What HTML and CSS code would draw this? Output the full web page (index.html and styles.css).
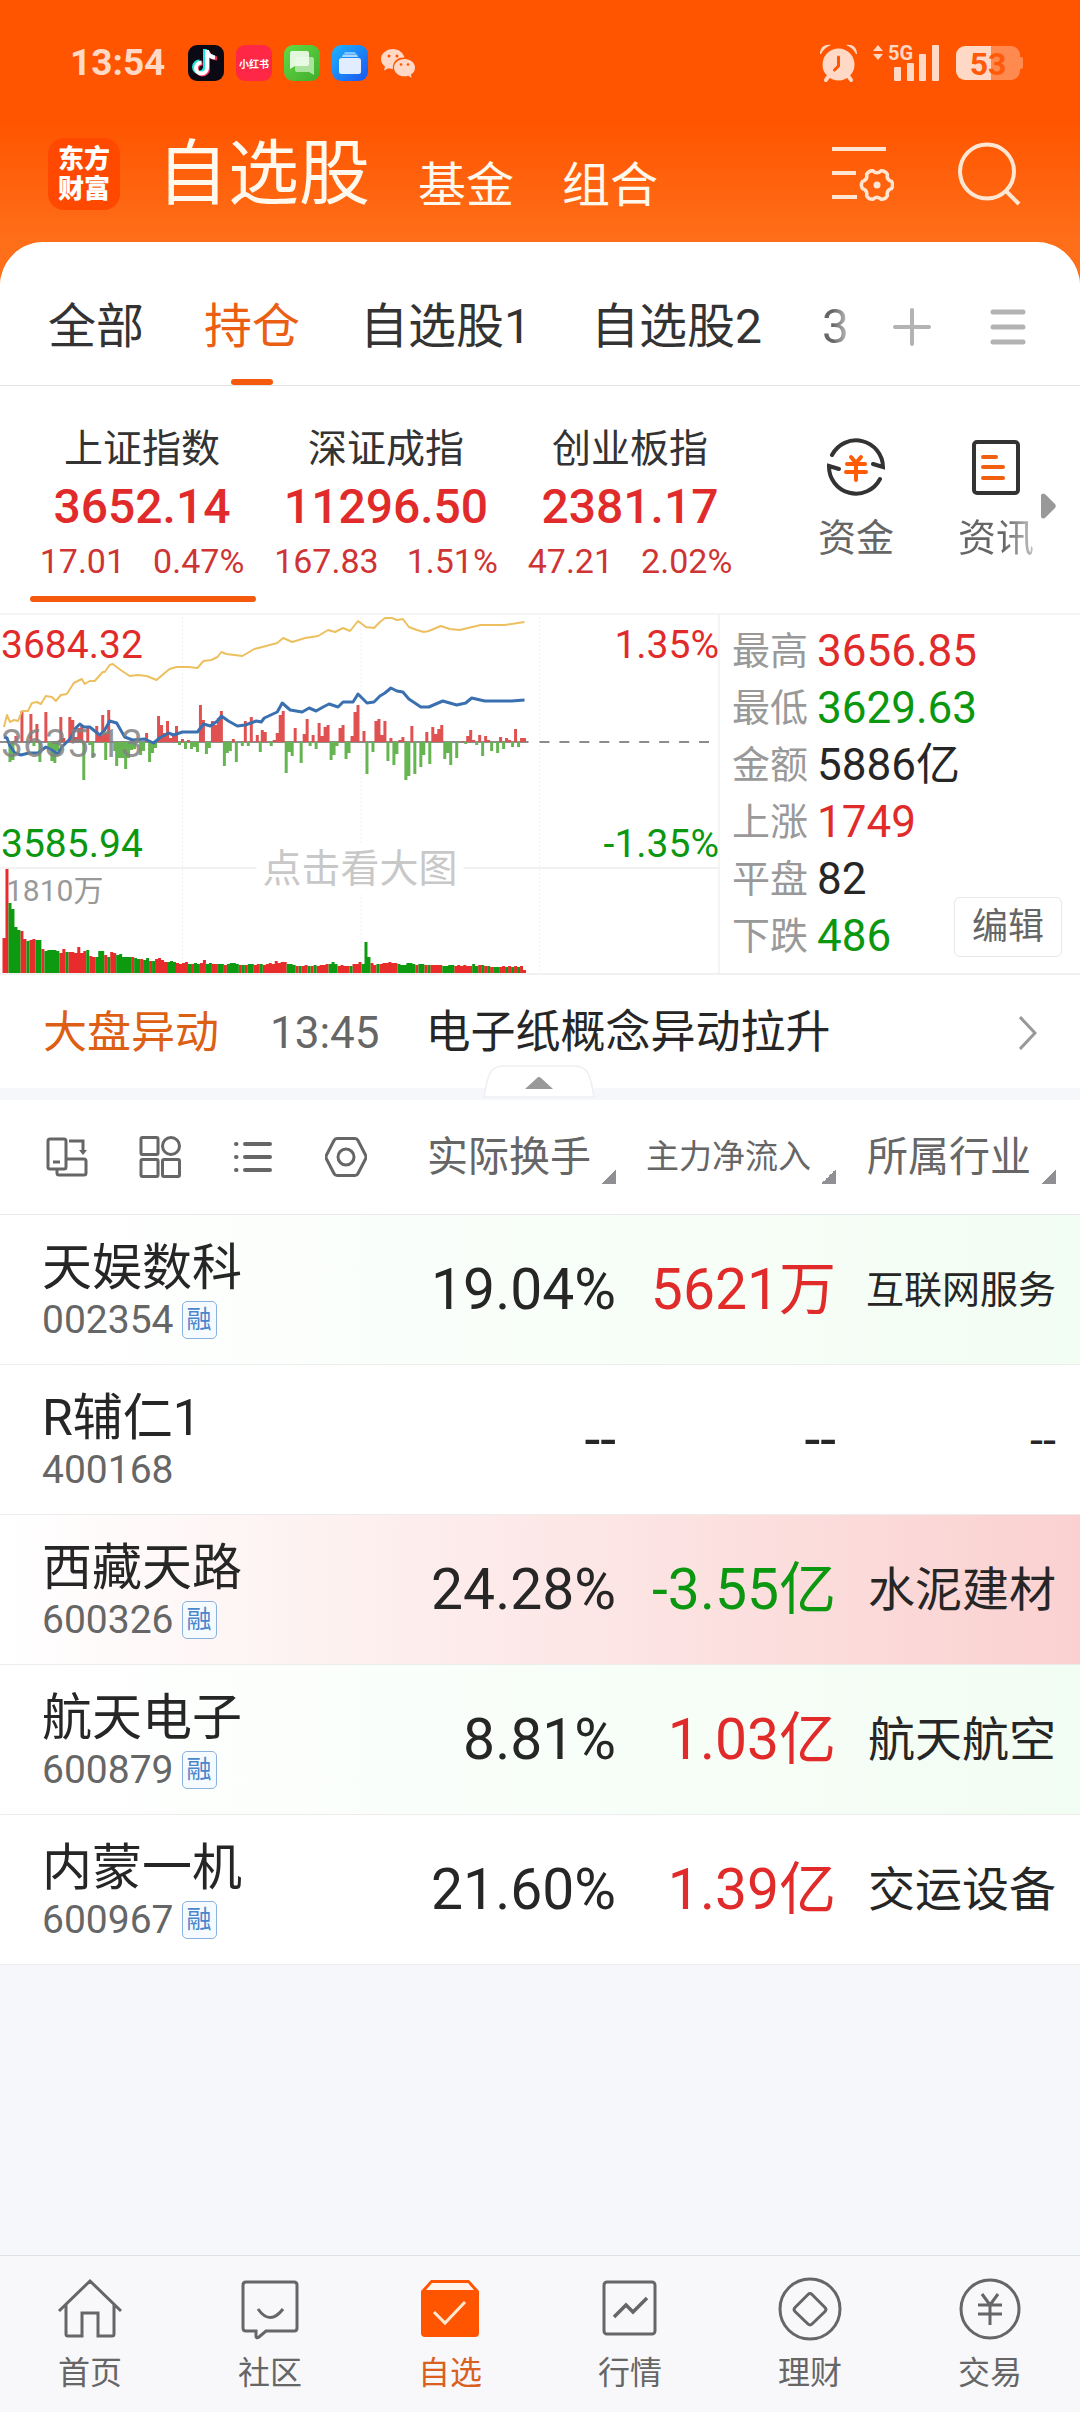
FILE: index.html
```html
<!DOCTYPE html>
<html lang="zh-CN">
<head>
<meta charset="utf-8">
<meta name="viewport" content="width=device-width, initial-scale=1">
<title>自选股</title>
<link rel="stylesheet" href="styles.css">
</head>
<body>
<header class="top">
  <div class="status">
    <span class="status-time">13:54</span>
    <svg class="app-icon" viewBox="0 0 36 36" aria-hidden="true">
      <rect width="36" height="36" rx="9" fill="#0b0a14"/>
      <g fill="none" stroke-width="4">
        <path d="M18 5v18a5.500 5.500 0 1 1-5.500-5.500M18 6c1 4 4 6 8 6.500" stroke="#25e5e0" transform="translate(-1 -1)"/>
        <path d="M19 5v18a5.500 5.500 0 1 1-5.500-5.500M19 6c1 4 4 6 9 6.500" stroke="#f9345f" transform="translate(1 1)"/>
        <path d="M19 5v18a5.500 5.500 0 1 1-5.500-5.500M19 6c1 4 4 6 8 6.500" stroke="#fff"/>
      </g>
    </svg>
    <span class="app-icon app-red">小红书</span>
    <svg class="app-icon" viewBox="0 0 36 36" aria-hidden="true">
      <defs><linearGradient id="msg" x1="0" y1="0" x2="1" y2="1"><stop offset="0" stop-color="#63d944"/><stop offset="1" stop-color="#40ad2d"/></linearGradient></defs>
      <rect width="36" height="36" rx="9" fill="url(#msg)"/>
      <path d="M13 12h15q2 0 2 2v16l-5-3H13q-2 0-2-2V14q0-2 2-2z" fill="#a9e39c"/>
      <path d="M8 6h15q2 0 2 2v11q0 2-2 2H11l-5 3V8q0-2 2-2z" fill="#eefbea" fill-opacity=".92"/>
    </svg>
    <svg class="app-icon" viewBox="0 0 36 36" aria-hidden="true">
      <defs><linearGradient id="fil" x1="0" y1="0" x2="1" y2="1"><stop offset="0" stop-color="#1db4ff"/><stop offset="1" stop-color="#1b55f0"/></linearGradient></defs>
      <rect width="36" height="36" rx="9" fill="url(#fil)"/>
      <path d="M13 7h10l1 2H12z" fill="#7cc5ff"/><path d="M11 9.500h14l1 2.500H10z" fill="#a9d8ff"/>
      <rect x="7" y="13" width="22" height="16" rx="2.500" fill="#e2ecff"/>
    </svg>
    <svg class="app-icon" viewBox="0 0 36 36" aria-hidden="true">
      <path d="M13 4C6.500 4 1 8.500 1 14c0 3 1.600 5.600 4 7.500L4 25.500l4.500-2.300q2.200.8 4.500.8C12 17 17 12 24.500 12.500 23 7.500 18.500 4 13 4z" fill="#ffd9c6"/>
      <path d="M24.500 14C18.700 14 14 17.900 14 22.700s4.700 8.600 10.500 8.600q1.900 0 3.600-.5l3.700 2-1-3.300c2.600-1.500 4.200-4 4.200-6.800C35 17.900 30.300 14 24.500 14z" fill="#ffd9c6"/>
      <g fill="#ff5500"><circle cx="9" cy="11" r="1.500"/><circle cx="17" cy="11" r="1.500"/><circle cx="21" cy="19.500" r="1.300"/><circle cx="28" cy="19.500" r="1.300"/></g>
    </svg>
    <span class="status-right">
      <svg width="37" height="38" viewBox="0 0 37 38" aria-hidden="true">
        <circle cx="18.500" cy="20.500" r="16" fill="#ffd9c6"/>
        <path d="M8 33l-2 3M29 33l2 3" stroke="#ffd9c6" stroke-width="4" stroke-linecap="round"/>
        <path d="M0 10C0 3 5 0 11 1 6 3 3 6 1 10zM37 10C37 3 32 0 26 1c5 2 8 5 10 9z" fill="#ffd9c6"/>
        <path d="M18.500 13v9l-4 4" fill="none" stroke="#ff5500" stroke-width="3" stroke-linecap="round"/>
      </svg>
      <svg width="67" height="50" viewBox="0 -6 67 50" aria-hidden="true">
        <path d="M5 1l5 6H0zM5 16l5-6H0z" fill="#ffd9c6"/>
        <text x="15" y="16" class="signal-text">5G</text>
        <g fill="#ffd9c6"><rect x="21" y="23" width="7" height="14" rx="1"/><rect x="34" y="19" width="7" height="18" rx="1"/><rect x="46" y="10" width="7" height="27" rx="1"/><rect x="59" y="1" width="7" height="36" rx="1"/></g>
      </svg>
      <span class="battery">53</span>
    </span>
  </div>
  <div class="title-bar">
    <a class="logo" href="#home">东方<br>财富</a>
    <nav class="title-nav">
      <h1 class="title">自选股</h1>
      <a href="#fund">基金</a>
      <a href="#portfolio">组合</a>
    </nav>
    <button class="icon-btn" aria-label="设置">
      <svg width="62" height="56" viewBox="0 0 62 56" fill="none" stroke="#ffe6d2" stroke-width="4">
        <path d="M0 3h54M0 27h24M0 51h25"/>
        <path d="M16.500-4.100Q19 0 16.500 4.100 10.500 6 11.800 12.200 9.500 16.500 4.700 16.300 0 11.500-4.700 16.300-9.500 16.500-11.800 12.200-10.500 6-16.500 4.100-19 0-16.500-4.100-10.500-6-11.800-12.200-9.500-16.500-4.700-16.300 0-11.500 4.700-16.300 9.500-16.500 11.800-12.200 10.500-6 16.500-4.100z" transform="translate(45 39) scale(.88)"/>
        <circle cx="45" cy="39" r="3.500" fill="#ffe6d2" stroke="none"/>
      </svg>
    </button>
    <button class="icon-btn" aria-label="搜索">
      <svg width="63" height="64" viewBox="0 0 63 64" fill="none" stroke="#ffe6d2" stroke-width="4"><circle cx="29" cy="29.500" r="27"/><path d="M47 48l14 14"/></svg>
    </button>
  </div>
</header>

<main class="panel">
  <div class="tabs">
    <nav class="tab-list">
      <a href="#all">全部</a>
      <a class="active" href="#hold">持仓</a>
      <a href="#g1">自选股1</a>
      <a href="#g2">自选股2</a>
      <a class="fade" href="#g3">3</a>
    </nav>
    <button class="icon-btn" aria-label="添加分组">
      <svg width="38" height="38" viewBox="0 0 38 38" stroke="#b3b3b3" stroke-width="4" stroke-linecap="round"><path d="M2 19h34M19 2v34"/></svg>
    </button>
    <button class="icon-btn" aria-label="分组列表">
      <svg width="36" height="38" viewBox="0 0 36 38" stroke="#b3b3b3" stroke-width="5" stroke-linecap="round"><path d="M3 4h30M3 19h30M3 34h30"/></svg>
    </button>
  </div>

  <section class="indices">
    <button class="index active"><span class="index-name">上证指数</span><strong>3652.14</strong><span class="index-change"><span>17.01</span><span>0.47%</span></span></button>
    <button class="index"><span class="index-name">深证成指</span><strong>11296.50</strong><span class="index-change"><span>167.83</span><span>1.51%</span></span></button>
    <button class="index"><span class="index-name">创业板指</span><strong>2381.17</strong><span class="index-change"><span>47.21</span><span>2.02%</span></span></button>
    <div class="shortcuts">
      <a class="shortcut" href="#flow">
        <svg width="60" height="60" viewBox="0 0 60 60" fill="none" stroke="#333" stroke-width="4" stroke-linecap="round">
          <path d="M6 18A27 27 0 0 1 57 30l-10-3M54 42A27 27 0 0 1 3 29l10 3"/>
          <path d="M25 20l5 6 5-6M21 27h18M20 35h20M30 27v16" stroke="#ff5a05"/>
        </svg>
        <span>资金</span>
      </a>
      <a class="shortcut" href="#news">
        <svg width="60" height="60" viewBox="0 0 60 60" fill="none" stroke-linecap="round">
          <rect x="8" y="5" width="44" height="51" rx="3" stroke="#333" stroke-width="4"/>
          <path d="M17 20h13M17 30h20M17 41h20" stroke="#f0600f" stroke-width="4"/>
        </svg>
        <span class="fade">资讯</span>
      </a>
    </div>
    <svg class="more" width="15" height="26" viewBox="0 0 15 26" aria-hidden="true"><path d="M0 2q2-3 5 0l9 9q1.500 2 0 4l-9 9q-3 3-5 0z" fill="#999"/></svg>
  </section>

  <section class="market">
    <div class="chart">
      <svg id="chart" class="chart-svg" viewBox="0 0 720 358" preserveAspectRatio="none" aria-label="分时图">
        <path class="grid" d="M0 253h720"/>
        <path class="grid dotted" d="M183 2v356M362 2v356M541 2v356"/>
        <path class="mid" d="M0 127h530"/>
        <path class="mid" stroke-dasharray="10 10" d="M541 127h172"/>
        <path id="flow-up" class="flow up"/>
        <path id="flow-down" class="flow down"/>
        <path id="vol-up" class="vol up"/>
        <path id="vol-down" class="vol down"/>
        <polyline class="line avg" points="4,112 7,100 10,107 14,105 18,106 22,96 28,96 32,88 37,87 41,89 46,81 52,82 56,86 61,80 67,79 74,68 82,64 85,69 90,66 95,66 103,57 105,57 110,50 113,49 121,55 130,61 138,60 147,61 152,63 157,65 164,59 170,54 177,52 189,52 198,53 204,46 212,45 218,42 222,37 227,39 243,41 255,34 263,32 278,28 284,23 293,27 306,23 319,21 329,15 336,17 344,13 351,16 359,6 367,12 375,13 381,7 386,3 393,3 398,5 404,4 410,12 418,15 425,17 430,16 442,11 451,14 461,15 482,10 506,10 526,7"/>
        <polyline class="line price" points="4,122 7,123 10,131 15,138 21,140 29,138 38,138 46,132 52,135 58,139 62,132 71,123 76,113 80,109 84,112 90,112 100,120 105,115 110,106 117,108 125,122 133,125 145,124 154,128 160,123 169,118 174,120 183,117 198,117 204,109 211,111 218,106 222,101 229,106 238,111 246,110 257,106 262,107 265,103 278,97 283,88 291,95 303,97 310,93 317,96 324,92 330,89 339,92 344,87 354,87 359,79 368,88 375,87 381,81 386,78 392,73 398,76 404,77 410,84 422,92 430,92 444,86 458,90 467,88 473,83 486,86 513,86 526,85"/>
      </svg>
      <span class="mark mark-high rise">3684.32</span>
      <span class="mark mark-high right rise">1.35%</span>
      <span class="mark mark-mid">3635.13</span>
      <span class="mark mark-low fall">3585.94</span>
      <span class="mark mark-low right fall">-1.35%</span>
      <span class="mark mark-vol">1810万</span>
      <a class="chart-hint" href="#chart">点击看大图</a>
    </div>
    <div class="stats">
      <dl>
        <div><dt>最高</dt><dd class="rise">3656.85</dd></div>
        <div><dt>最低</dt><dd class="fall">3629.63</dd></div>
        <div><dt>金额</dt><dd>5886亿</dd></div>
        <div><dt>上涨</dt><dd class="rise">1749</dd></div>
        <div><dt>平盘</dt><dd>82</dd></div>
        <div><dt>下跌</dt><dd class="fall">486</dd></div>
      </dl>
      <button class="edit">编辑</button>
    </div>
  </section>

  <section class="alert">
    <a class="alert-row" href="#alert">
      <span class="alert-tag">大盘异动</span>
      <time>13:45</time>
      <span class="alert-text">电子纸概念异动拉升</span>
      <svg width="18" height="34" viewBox="0 0 18 34" fill="none" stroke="#999" stroke-width="3"><path d="M1 1l15 16L1 33"/></svg>
    </a>
    <button class="handle" aria-label="收起">
      <svg width="112" height="33" viewBox="0 0 112 33"><path d="M1 32C4 18 4 1 20 1h72c16 0 16 17 19 31z" fill="#fff" stroke="#eeeff2" stroke-width="1.500"/><path d="M42 24h28L58 13q-2-2-4 0z" fill="#999"/></svg>
    </button>
  </section>

  <table class="stocks">
    <colgroup><col><col class="col-num"><col class="col-num"><col class="col-last"></colgroup>
    <thead>
      <tr>
        <th>
          <div class="tools">
            <button class="icon-btn" aria-label="横屏"><svg width="42" height="42" viewBox="0 0 42 42" fill="none" stroke="#666" stroke-width="3"><rect x="2" y="3" width="18" height="30" rx="2"/><path d="M7 26h7M11 33v4q0 2 2 2h25q2 0 2-2V25q0-2-2-2H20M23 5h14v11"/><path d="M33 14h8l-4 5z" fill="#666" stroke="none"/></svg></button>
            <button class="icon-btn" aria-label="宫格"><svg width="42" height="42" viewBox="0 0 42 42" fill="none" stroke="#666" stroke-width="3"><rect x="2" y="1.500" width="17" height="17" rx="1.500"/><circle cx="32" cy="10" r="8.500"/><rect x="2" y="23.500" width="17" height="17" rx="1.500"/><rect x="23.500" y="23.500" width="17" height="17" rx="1.500"/></svg></button>
            <button class="icon-btn" aria-label="列表"><svg width="42" height="42" viewBox="0 0 42 42" fill="none" stroke="#666" stroke-width="4" stroke-linecap="round"><path d="M13 8h25M13 21h25M13 34h25M4 8h.5M4 21h.5M4 34h.5"/></svg></button>
            <button class="icon-btn" aria-label="设置"><svg width="42" height="42" viewBox="0 0 42 42" fill="none" stroke="#666" stroke-width="3"><path d="M12 2.500h18q2 0 3 2L40.500 19q1 2 0 4L33 37.500q-1 2-3 2H12q-2 0-3-2L1.500 23q-1-2 0-4L9 4.500q1-2 3-2z"/><circle cx="21" cy="21" r="8"/></svg></button>
          </div>
        </th>
        <th><button class="sort">实际换手</button></th>
        <th><button class="sort small">主力净流入</button></th>
        <th><button class="sort">所属行业</button></th>
      </tr>
    </thead>
    <tbody>
      <tr class="tint-green"><td><div class="name">天娱数科</div><div class="code">002354<span class="badge">融</span></div></td><td>19.04%</td><td class="rise">5621万</td><td class="trade long">互联网服务</td></tr>
      <tr><td><div class="name">R辅仁1</div><div class="code">400168</div></td><td>--</td><td>--</td><td class="trade">--</td></tr>
      <tr class="tint-red"><td><div class="name">西藏天路</div><div class="code">600326<span class="badge">融</span></div></td><td>24.28%</td><td class="fall">-3.55亿</td><td class="trade">水泥建材</td></tr>
      <tr class="tint-green"><td><div class="name">航天电子</div><div class="code">600879<span class="badge">融</span></div></td><td>8.81%</td><td class="rise">1.03亿</td><td class="trade">航天航空</td></tr>
      <tr><td><div class="name">内蒙一机</div><div class="code">600967<span class="badge">融</span></div></td><td>21.60%</td><td class="rise">1.39亿</td><td class="trade">交运设备</td></tr>
    </tbody>
  </table>
</main>

<nav class="dock">
  <a href="#home"><svg width="66" height="64" viewBox="0 0 66 64" fill="none" stroke="#666" stroke-width="3"><path d="M2 34L33 4l31 30M9 28v29q0 2 2 2h14V36h16v23h14q2 0 2-2V28"/></svg><span>首页</span></a>
  <a href="#club"><svg width="66" height="64" viewBox="0 0 66 64" fill="none" stroke="#666" stroke-width="3"><path d="M9 5h48q3 0 3 3v43q0 3-3 3H29l-7 6q-3 2-3-1v-5H9q-3 0-3-3V8q0-3 3-3z"/><path d="M21 32q12 17 25 0"/></svg><span>社区</span></a>
  <a class="active" href="#watch"><svg width="66" height="64" viewBox="0 0 66 64" fill="none"><path d="M14 3h38l10 11v42q0 4-4 4H8q-4 0-4-4V14z" fill="#ff5500"/><path d="M15 6h36l6 7H9z" fill="#fff3ea"/><path d="M17 35l11 11 20-21" stroke="#ffe9d2" stroke-width="3"/></svg><span>自选</span></a>
  <a href="#quote"><svg width="66" height="64" viewBox="0 0 66 64" fill="none" stroke="#666" stroke-width="3"><rect x="7" y="5" width="51" height="52" rx="3"/><path d="M17 40l12-12 7 7 14-14" stroke-width="3.500"/></svg><span>行情</span></a>
  <a href="#wealth"><svg width="66" height="64" viewBox="0 0 66 64" fill="none" stroke="#666" stroke-width="3"><circle cx="33" cy="32" r="30"/><path d="M31 17.500q2-2 4 0l13 13q2 2 0 4l-13 12.500q-2 2-4 0L18 34.500q-2-2 0-4z"/></svg><span>理财</span></a>
  <a href="#trade"><svg width="66" height="64" viewBox="0 0 66 64" fill="none" stroke="#666" stroke-width="3"><circle cx="33" cy="32" r="29"/><path d="M25 17l8 11 8-11M21 28h24M21 37h24M33 28v20"/></svg><span>交易</span></a>
</nav>
<script src="chart.js"></script>
</body>
</html>
```
FILE: styles.css
```css
* { box-sizing: border-box; }

body {
  margin: 0;
  min-height: 100vh;
  display: flex;
  flex-direction: column;
  background: #f6f7fa;
  color: #262626;
  font-family: Roboto, "Noto Sans CJK SC", sans-serif;
}

a { color: inherit; text-decoration: none; }
button { padding: 0; border: 0; background: none; color: inherit; font: inherit; }
svg { display: block; flex: none; }
.icon-btn { display: flex; }
.rise { color: #e12b2b; }
.fall { color: #0b970f; }

/* Header */
.top {
  padding-bottom: 48px;
  margin-bottom: -48px;
  background: linear-gradient(#ff5500 0, #ff5500 42%, #ff6f1a 84%);
}

.status {
  display: flex;
  align-items: center;
  gap: 12px;
  padding: 42px 60px 0 70px;
  height: 84px;
}
.status-time { width: 106px; color: #ffd9c6; font-size: 37px; font-weight: 700; line-height: 42px; }
.app-icon { width: 36px; height: 36px; }
.app-red {
  display: flex;
  align-items: center;
  justify-content: center;
  border-radius: 9px;
  background: #ff2746;
  color: #fff;
  font-size: 10px;
  font-weight: 700;
}
.status-right { display: flex; align-items: center; gap: 16px; margin-left: auto; }
.signal-text { fill: #ffd9c6; font-size: 20px; font-weight: 700; }
.battery {
  position: relative;
  width: 64px;
  height: 34px;
  border-radius: 9px;
  background: linear-gradient(90deg, #ffd9c6 55%, #ff8a50 55%);
  color: #ff5a0a;
  font-size: 32px;
  font-weight: 700;
  line-height: 36px;
  text-align: center;
}
.battery::after {
  content: "";
  position: absolute;
  right: -3px;
  top: 11px;
  width: 3px;
  height: 12px;
  border-radius: 0 2px 2px 0;
  background: #ff8a50;
}

.title-bar {
  display: flex;
  align-items: center;
  gap: 64px;
  height: 158px;
  padding: 44px 59px 22px 48px;
}
.logo {
  display: flex;
  align-items: center;
  justify-content: center;
  width: 72px;
  height: 72px;
  border-radius: 16px;
  background: #ff4800;
  color: #fff;
  font-size: 26px;
  font-weight: 900;
  line-height: 30px;
}
.title-nav {
  display: flex;
  align-items: flex-end;
  flex: 1;
  gap: 48px;
  margin-left: -27px;
  color: #fff8ec;
  font-size: 48px;
  line-height: 76px;
}
.title { margin: 0; font-size: 71px; font-weight: 400; line-height: 100px; }

/* White panel */
.panel { flex: 1; border-radius: 44px 44px 0 0; background: #f6f7fa; overflow: hidden; }

.tabs {
  display: flex;
  align-items: center;
  gap: 59px;
  height: 144px;
  padding: 26px 54px 0 48px;
  border-bottom: 1px solid #e4e4e4;
  background: #fff;
}
.tab-list {
  display: flex;
  flex: 1;
  min-width: 0;
  gap: 60px;
  color: #333;
  font-size: 48px;
  line-height: 117px;
  white-space: nowrap;
}
.tab-list a { position: relative; }
.tab-list .active { color: #eb5f14; }
.tab-list .active::after {
  content: "";
  position: absolute;
  left: 50%;
  bottom: 0;
  width: 42px;
  height: 6px;
  margin-left: -21px;
  border-radius: 3px;
  background: #f5590d;
}
.fade {
  background: linear-gradient(90deg, #666 40%, #c4c4c4);
  background-clip: text;
  -webkit-background-clip: text;
  color: transparent;
}

/* Index strip */
.indices {
  display: flex;
  align-items: center;
  padding: 0 24px 0 20px;
  height: 229px;
  border-bottom: 2px solid #f4f4f5;
  background: #fff;
}
.index {
  position: relative;
  display: flex;
  flex-direction: column;
  align-items: center;
  flex: 0 0 244px;
  align-self: stretch;
  padding-top: 36px;
  white-space: nowrap;
}
.index-name { color: #333; font-size: 39px; line-height: 54px; }
.index strong { color: #e12b2b; font-size: 48px; font-weight: 500; line-height: 62px; }
.index-change { display: flex; gap: 28px; color: #cf3434; font-size: 34px; line-height: 46px; }
.index.active::after {
  content: "";
  position: absolute;
  left: 10px;
  right: 8px;
  bottom: 11px;
  height: 6px;
  border-radius: 3px;
  background: #f5590d;
}
.shortcuts { display: flex; flex: 1; justify-content: flex-end; gap: 64px; padding: 4px 7px 0 0; }
.shortcut {
  display: flex;
  flex-direction: column;
  align-items: center;
  gap: 12px;
  color: #666;
  font-size: 38px;
  line-height: 58px;
}
.shortcut .fade { background-image: linear-gradient(90deg, #666 60%, #c4c4c4); }
.more { margin-top: 12px; }

/* Chart and market figures */
.market { display: grid; grid-template-columns: 2fr 1fr; border-bottom: 2px solid #f1f1f2; background: #fff; }
.chart { position: relative; }
.chart-svg { width: 100%; height: 358px; border-right: 2px solid #f4f4f5; }
.grid { fill: none; stroke: #f1f1f2; stroke-width: 2; }
.dotted { stroke-width: 1; stroke-dasharray: 2 2; }
.mid { fill: none; stroke: #8c8c8c; stroke-width: 2; }
.flow { stroke-width: 3; }
.flow.up { stroke: #e05252; }
.flow.down { stroke: #67b552; }
.vol { stroke-width: 3; }
.vol.up { stroke: #e82c2c; }
.vol.down { stroke: #0e9a10; }
.line { fill: none; stroke-linejoin: round; }
.avg { stroke: #edc05f; stroke-width: 2; }
.price { stroke: #3a70b0; stroke-width: 3; }

.mark { position: absolute; left: 1px; font-size: 39px; line-height: 46px; }
.mark.right { left: auto; right: 1px; }
.mark-high { top: 7px; }
.mark-mid { top: 106px; color: rgba(130, 130, 130, .85); }
.mark-low { top: 206px; }
.mark-vol { left: 6px; top: 253px; color: #999; font-size: 30px; }
.chart-hint {
  position: absolute;
  left: 50%;
  top: 229px;
  padding: 0 6px;
  transform: translateX(-50%);
  background: #fff;
  color: #c8c8c8;
  font-size: 39px;
  line-height: 50px;
  white-space: nowrap;
}

.stats { position: relative; padding: 8px 0 0 12px; }
.stats dl { margin: 0; }
.stats dl div { display: flex; align-items: center; gap: 9px; height: 57px; }
.stats dt { color: #999; font-size: 38px; line-height: 57px; }
.stats dd { margin: 0; font-size: 44px; line-height: 57px; }
.edit {
  position: absolute;
  right: 18px;
  bottom: 16px;
  width: 108px;
  height: 60px;
  border: 1px solid #e8e8ea;
  border-radius: 6px;
  background: #fff;
  color: #666;
  font-size: 36px;
  line-height: 58px;
}

/* Market alert */
.alert { position: relative; border-bottom: 12px solid #f6f7fa; background: #fff; }
.alert-row {
  display: flex;
  align-items: center;
  height: 113px;
  padding: 2px 43px 0;
  font-size: 45px;
  line-height: 60px;
}
.alert-tag { color: #dd5f14; font-size: 44px; }
.alert time { margin: 0 46px 0 51px; color: #666; font-size: 44px; }
.alert-text { flex: 1; }
.handle { position: absolute; left: 50%; bottom: -10px; margin-left: -57px; }

/* Stock table */
.stocks { width: 100%; table-layout: fixed; border-collapse: collapse; background: #fff; }
.col-num { width: 220px; }
.col-last { width: 244px; }
.stocks th { height: 114px; padding: 0; border-bottom: 1px solid #e9e9e9; font-weight: 400; }
.stocks td {
  height: 150px;
  padding: 2px 0 0;
  border-bottom: 1px solid #ececec;
  text-align: right;
  font-size: 57px;
  line-height: 76px;
  white-space: nowrap;
}
.stocks th:first-child { padding-left: 46px; }
.stocks td:first-child { padding-left: 42px; text-align: left; }
.stocks th:last-child, .stocks td:last-child { padding-right: 24px; }
.tools { display: flex; gap: 51px; }
.sort {
  display: flex;
  align-items: center;
  gap: 10px;
  margin-left: auto;
  color: #666;
  font-size: 41px;
  line-height: 54px;
  white-space: nowrap;
}
.sort.small { font-size: 33px; }
.sort::after {
  content: "";
  align-self: flex-end;
  width: 15px;
  height: 15px;
  background: linear-gradient(135deg, transparent 50%, #8f8f94 50%);
}
.name { font-size: 50px; line-height: 60px; }
.code { display: flex; align-items: center; gap: 8px; color: #666; font-size: 39px; line-height: 44px; }
.badge {
  width: 35px;
  height: 38px;
  border: 1px solid #8ab2dd;
  border-radius: 5px;
  background: #f5faff;
  color: #4a86cc;
  font-size: 25px;
  line-height: 35px;
  text-align: center;
}
.stocks .trade { font-size: 47px; }
.stocks .long { font-size: 38px; }
.tint-green { background: linear-gradient(90deg, #fff, #f2fdf3); }
.tint-red { background: linear-gradient(90deg, #fff, #fad1d0); }

/* Bottom navigation */
.dock {
  display: grid;
  grid-template-columns: repeat(6, 1fr);
  height: 157px;
  padding-top: 21px;
  border-top: 1px solid #dee2e3;
  background: #f8f8fb;
  color: #666;
  font-size: 32px;
  line-height: 64px;
}
.dock a { display: flex; flex-direction: column; align-items: center; }
.dock .active { color: #d9601f; }
```
FILE: chart.js
```javascript
// Net flow per minute: position, height (positive above the midline).
const flow = [
  [10,-20],[13,-18],[16,6],[22,31],[31,28],[34,-4],[37,18],[40,-20],[46,30],[49,-8],[52,-19],[55,-21],[58,-9],[61,25],
  [64,4],[70,25],[73,22],[76,5],[79,14],[82,17],[84,-38],[88,14],[90,-3],[93,-16],[97,16],[100,6],[103,27],[106,-18],
  [106,9],[109,32],[115,-9],[117,-24],[120,-16],[123,-16],[126,-27],[129,-16],[132,-8],[135,-7],[141,-13],[144,-9],
  [147,9],[150,-20],[153,-11],[156,-6],[159,26],[162,17],[165,9],[168,21],[171,4],[174,6],[177,16],[180,-3],[183,3],
  [186,-7],[189,2],[192,-7],[195,-5],[198,-10],[201,37],[204,22],[207,-12],[210,-6],[213,21],[216,17],[219,24],[222,31],
  [225,-24],[228,-11],[231,-9],[234,3],[237,-20],[243,-4],[246,21],[249,-4],[252,25],[258,7],[261,-10],[263,12],[266,10],
  [272,-4],[275,2],[278,9],[281,27],[284,31],[287,-31],[290,-10],[293,-14],[296,14],[302,-21],[305,8],[308,23],[311,-4],
  [314,7],[317,-7],[320,19],[323,6],[326,15],[329,17],[332,-18],[335,-13],[338,-4],[341,14],[344,17],[347,-17],[350,-11],
  [353,6],[356,30],[359,37],[365,11],[368,-32],[374,-10],[377,21],[380,23],[383,7],[386,21],[389,-19],[392,4],[395,-23],
  [398,-12],[401,2],[404,5],[407,-38],[410,-34],[413,16],[416,-32],[422,-25],[425,-13],[428,10],[431,-22],[434,15],
  [437,8],[440,13],[443,17],[446,-17],[449,-11],[452,-23],[458,-16],[464,1],[467,-2],[469,6],[472,12],[475,2],[478,-3],
  [481,7],[484,-14],[487,6],[490,2],[493,-9],[499,-11],[502,5],[505,-7],[508,4],[511,2],[514,-5],[517,13],[520,-5],[523,4],[526,4]
];

// Volume per minute: colour letter and height.
const volume = `
  r35 r104 g70 g64 g46 g43 r42 r34 g32 r33 r34 g33 g33 r24 g22 g23 g23 g23 g22 r20
  r24 g21 r21 r21 r20 r26 r20 r22 g23 r17 r16 g16 g22 g22 r18 g16 r21 r20 g18 g19
  g16 g16 g16 r16 g15 g14 r14 g13 g15 r12 g12 r14 r15 r13 r11 g11 g12 g11 r10 r9
  r10 r11 g9 r9 g10 g9 r10 r13 g9 g10 r9 r9 g9 g9 r8 g9 g10 g10 g9 r8
  g8 r8 g9 g9 r8 r9 g9 r8 r9 r10 r9 r12 r10 r11 r11 g9 g9 g8 r7 g7
  r7 r8 g7 r7 g8 r7 r8 r8 r9 g9 g11 g9 r7 r8 r7 r7 g7 r9 r9 r11
  g9 g31 g16 r10 r8 g9 r9 r10 r10 r11 r10 r10 g9 g8 g8 g10 g10 g9 r8 g9
  g9 r8 g8 r8 r8 r8 r8 g7 g7 g8 g8 r7 r8 r7 r8 r7 r7 g9 g7 r8
  g8 r7 g7 r6 g6 g6 r6 r7 g6 r7 g6 r7 g6 r7 r3`.trim().split(/\s+/);

const bars = (list, base) => list.map(([x, h]) => `M${x} ${base}v${-h}`).join("");
const setPath = (id, d) => document.getElementById(id).setAttribute("d", d);

setPath("flow-up", bars(flow.filter(([, h]) => h > 0), 127));
setPath("flow-down", bars(flow.filter(([, h]) => h < 0), 127));

const columns = volume.map((v, i) => [3 * i + 4, Number(v.slice(1)), v[0]]);
setPath("vol-up", bars(columns.filter((c) => c[2] === "r"), 358));
setPath("vol-down", bars(columns.filter((c) => c[2] === "g"), 358));
```
